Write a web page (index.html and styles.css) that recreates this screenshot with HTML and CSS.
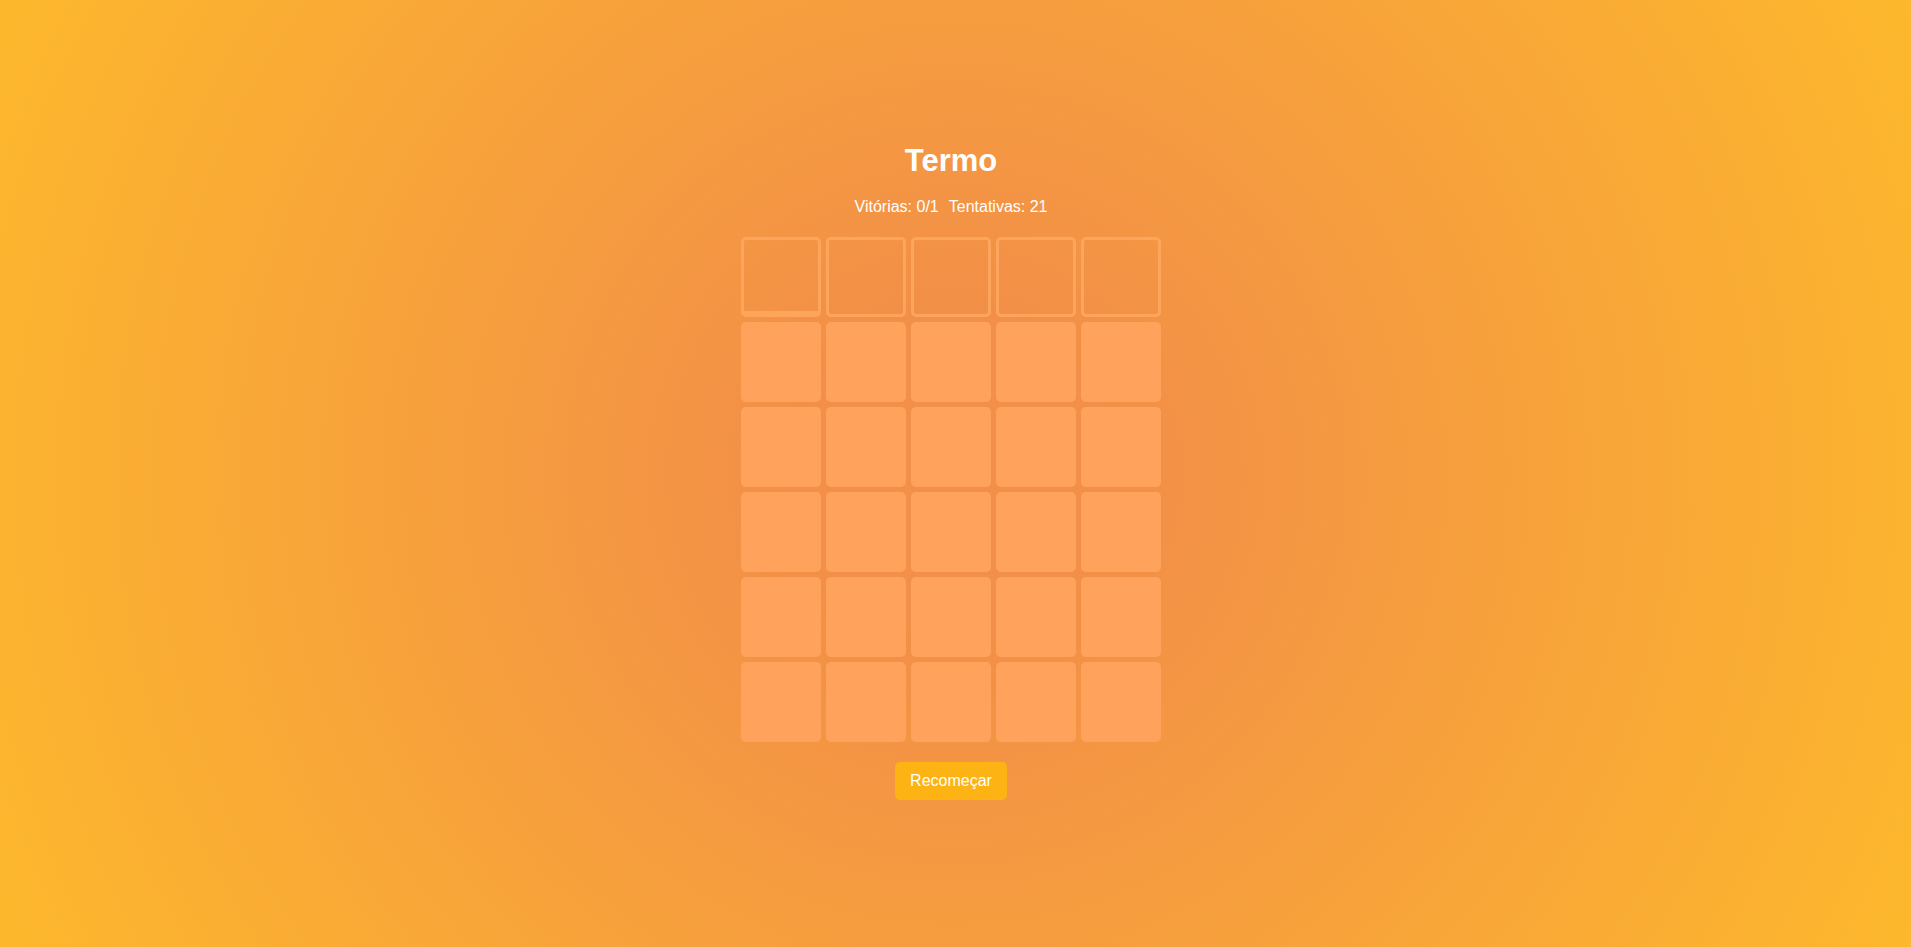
FILE: index.html
```html
<!DOCTYPE html>
<html lang="pt-BR">
<head>
<meta charset="utf-8">
<title>Termo</title>
<link rel="stylesheet" href="styles.css">
</head>
<body>
<main class="game">
  <h1 class="title">Termo</h1>
  <p class="stats"><span>Vitórias: 0/1</span><span>Tentativas: 21</span></p>
  <div class="board">
    <div class="tile empty active"></div>
    <div class="tile empty"></div>
    <div class="tile empty"></div>
    <div class="tile empty"></div>
    <div class="tile empty"></div>
    <div class="tile"></div><div class="tile"></div><div class="tile"></div><div class="tile"></div><div class="tile"></div>
    <div class="tile"></div><div class="tile"></div><div class="tile"></div><div class="tile"></div><div class="tile"></div>
    <div class="tile"></div><div class="tile"></div><div class="tile"></div><div class="tile"></div><div class="tile"></div>
    <div class="tile"></div><div class="tile"></div><div class="tile"></div><div class="tile"></div><div class="tile"></div>
    <div class="tile"></div><div class="tile"></div><div class="tile"></div><div class="tile"></div><div class="tile"></div>
  </div>
  <button class="restart" type="button">Recomeçar</button>
</main>
</body>
</html>
```

FILE: styles.css
```css
html, body {
  margin: 0;
  padding: 0;
}

body {
  box-sizing: border-box;
  min-height: 100vh;
  padding: 0 9px 5px 0;
  font-family: "Liberation Sans", Arial, sans-serif;
  color: #ffffff;
  background: radial-gradient(circle farthest-corner at 50% 50%, #f28f48 0%, #f28f48 15%, #fdb82c 100%);
  display: flex;
  align-items: center;
  justify-content: center;
}

.game {
  display: flex;
  flex-direction: column;
  align-items: center;
}

.title {
  margin: 0;
  font-size: 31px;
  line-height: 36px;
  font-weight: bold;
}

.stats {
  margin: 19px 0 0;
  font-size: 16px;
  line-height: 18px;
  display: flex;
  gap: 10px;
}

.board {
  margin-top: 21px;
  display: grid;
  grid-template-columns: repeat(5, 80px);
  grid-auto-rows: 80px;
  gap: 5px;
}

.tile {
  box-sizing: border-box;
  border-radius: 5px;
  background: #ffa35c;
}

.tile.empty {
  background: transparent;
  border: 3px solid rgba(255, 168, 96, 0.85);
}

.tile.empty.active {
  border-bottom-width: 6px;
}

.restart {
  margin-top: 20px;
  padding: 10px 15px;
  font-family: "Liberation Sans", Arial, sans-serif;
  font-size: 16px;
  line-height: 18px;
  color: #ffffff;
  background: #fdb314;
  border: none;
  border-radius: 5px;
  cursor: pointer;
}
```
